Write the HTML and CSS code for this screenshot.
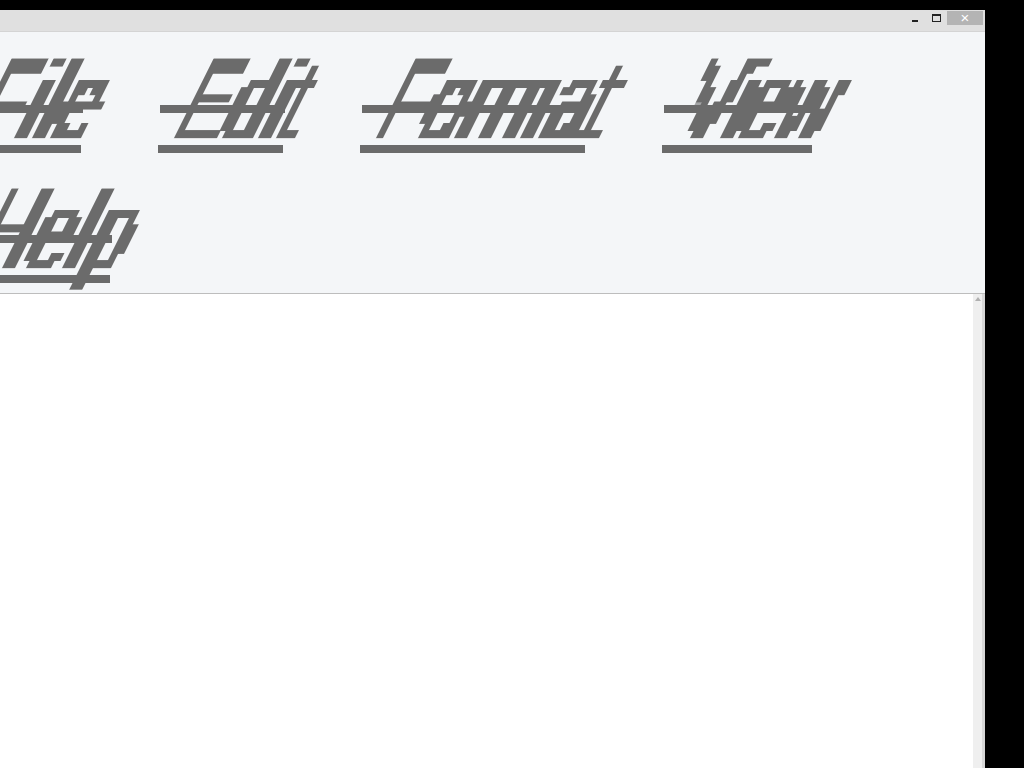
FILE: index.html
```html
<!doctype html>
<html lang="en">
 <head>
  <meta charset="UTF-8">
  <title>Editor</title>
  <link rel="stylesheet" href="styles.css">
 </head>
 <body>
  <svg class="defs" aria-hidden="true">
   <filter id="pixelate" x="0" y="0" width="100%" height="100%" color-interpolation-filters="sRGB">
    <feMorphology in="SourceAlpha" operator="dilate" radius="2 0" result="fat"/>
    <feFlood x="3" y="4" width="1" height="1" flood-color="#000" result="dot"/>
    <feComposite in="dot" in2="dot" width="6" height="8" result="cell"/>
    <feTile in="cell" result="grid"/>
    <feComposite in="fat" in2="grid" operator="in" result="sampled"/>
    <feMorphology in="sampled" operator="dilate" radius="3 4" result="blocks"/>
    <feComponentTransfer in="blocks" result="mask">
     <feFuncA type="linear" slope="60" intercept="-30"/>
    </feComponentTransfer>
    <feFlood flood-color="#6b6b6b" result="ink"/>
    <feComposite in="ink" in2="mask" operator="in"/>
   </filter>
  </svg>
  <div class="window">
   <div class="titlebar">
    <span class="btn-min"></span>
    <span class="btn-max"></span>
    <span class="btn-close">×</span>
   </div>
   <div class="menu">
    <div class="menu-item file"><div class="slant"><div class="glyphs"><span>File</span></div></div></div>
    <div class="menu-item edit"><div class="slant"><div class="glyphs"><span>Edit</span></div></div></div>
    <div class="menu-item format"><div class="slant"><div class="glyphs"><span>Format</span></div></div></div>
    <div class="menu-item view"><div class="slant"><div class="glyphs"><span>View</span></div></div></div>
    <div class="menu-item help"><div class="slant"><div class="glyphs"><span>Help</span></div></div></div>
   </div>
   <div class="content">
    <div class="scrollbar"><span class="arrow"></span></div>
   </div>
  </div>
 </body>
</html>
```

FILE: styles.css
```css
html, body {
    height: 100%;
}

body {
    margin: 0;
    background: #000;
    overflow: hidden;
    font-family: "Liberation Sans", sans-serif;
}

.defs {
    position: absolute;
    width: 0;
    height: 0;
}

.window {
    display: flex;
    flex-direction: column;
    height: 758px;
    margin: 10px 39px 0 -44px;
    background: #fff;
}

.titlebar {
    display: flex;
    align-items: flex-start;
    justify-content: flex-end;
    height: 21px;
    padding-right: 2px;
    background: #e0e0e0;
    border-bottom: 1px solid #d4d4d4;
}

.btn-min {
    width: 6px;
    height: 2px;
    margin: 10px 14px 0 0;
    background: #222;
}

.btn-max {
    width: 7px;
    height: 5px;
    margin: 4px 6px 0 0;
    border: 1px solid #222;
    border-top-width: 2px;
}

.btn-close {
    width: 36px;
    height: 14px;
    margin-top: 1px;
    background: #b4b4b4;
    color: #fff;
    font-size: 15px;
    line-height: 14px;
    text-align: center;
}

.menu {
    display: flex;
    flex-wrap: wrap;
    align-content: flex-start;
    gap: 9px 77px;
    height: 262px;
    background: #f4f6f8;
    border-bottom: 1px solid #bdbdbd;
    box-sizing: border-box;
}

.menu-item {
    position: relative;
    box-sizing: border-box;
    height: 121px;
    border-bottom: 8px solid #6b6b6b;
}

.menu-item::after {
    content: "";
    position: absolute;
    top: 73px;
    left: 2px;
    width: 100%;
    height: 8px;
    background: #6b6b6b;
}

.file { width: 125px; letter-spacing: 2.5px; }
.edit { width: 125px; }
.format { width: 225px; }
.view { width: 150px; letter-spacing: -2.5px; }
.help { width: 154px; letter-spacing: 2px; }

.slant {
    width: 100%;
    height: 100%;
    transform: skewX(-26.5deg);
    transform-origin: 0 105px;
}

.glyphs {
    width: calc(100% + 30px);
    height: 136px;
    margin-top: -3px;
    padding: 16px 0 0 12px;
    box-sizing: border-box;
    filter: url(#pixelate);
}

.glyphs span {
    display: block;
    font-size: 112px;
    line-height: 1;
    white-space: nowrap;
    color: #6b6b6b;
    transform: scaleX(0.635);
    transform-origin: 0 0;
}

.content {
    flex: 1;
    display: flex;
    justify-content: flex-end;
    background: #fff;
}

.scrollbar {
    position: relative;
    width: 9px;
    background: #efefef;
    border-right: 3px solid #d8d8d8;
}

.arrow {
    position: absolute;
    top: 3px;
    left: 2px;
    width: 0;
    height: 0;
    border-left: 3px solid transparent;
    border-right: 3px solid transparent;
    border-bottom: 4px solid #b0b0b0;
}
```
